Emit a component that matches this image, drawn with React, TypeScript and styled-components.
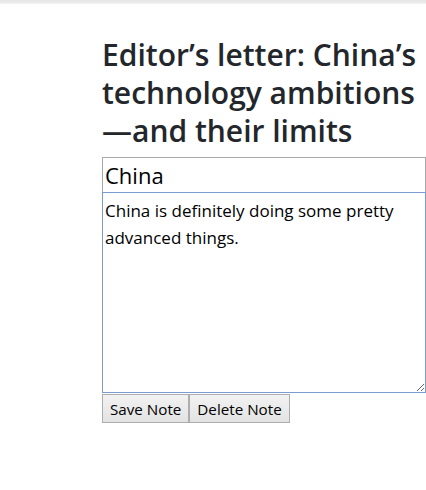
import React from "react";
import styled, { createGlobalStyle } from "styled-components";

const Global = createGlobalStyle`
  html, body { margin: 0; padding: 0; background: #fff; }
  body { font-family: "Open Sans", "Noto Sans", sans-serif; color: #1f2328; }
`;

const TopBar = styled.div`
  height: 4px;
  background: linear-gradient(to bottom, #e6e6e6 0%, #ececec 70%, #f7f7f7 100%);
`;

const Page = styled.div`
  padding: 32px 0 0 102px;
`;

const Title = styled.h1`
  margin: 0 0 7px 0;
  font-size: 30px;
  line-height: 38px;
  font-weight: 600;
  color: #23272b;
  width: 324px;
`;

const Form = styled.div`
  display: flex;
  flex-direction: column;
  width: 324px;
`;

const TitleInput = styled.input`
  box-sizing: border-box;
  width: 100%;
  height: 35px;
  margin: 0;
  padding: 0 2px;
  border: 1px solid #a9a9a9;
  border-bottom: none;
  font-family: inherit;
  font-size: 22px;
  color: #000;
  outline: none;
`;

const Body = styled.textarea`
  box-sizing: border-box;
  width: 100%;
  height: 201px;
  margin: 0;
  padding: 4px 2px;
  border: 1px solid #7a9cd3;
  font-family: inherit;
  font-size: 17px;
  line-height: 27px;
  color: #000;
  outline: none;
  resize: both;
`;

const Buttons = styled.div`
  display: flex;
  margin-top: 1px;
`;

const Button = styled.button`
  height: 29px;
  padding: 0 7px;
  margin: 0;
  border: 1px solid #adadad;
  background: linear-gradient(#f2f2f2, #e3e3e3);
  font-family: inherit;
  font-size: 15.2px;
  color: #000;
`;

export default function App() {
  return (
    <>
      <Global />
      <TopBar />
      <Page>
        <Title>Editor’s letter: China’s technology ambitions —and their limits</Title>
        <Form>
          <TitleInput defaultValue="China" />
          <Body defaultValue="China is definitely doing some pretty advanced things." />
          <Buttons>
            <Button>Save Note</Button>
            <Button>Delete Note</Button>
          </Buttons>
        </Form>
      </Page>
    </>
  );
}
